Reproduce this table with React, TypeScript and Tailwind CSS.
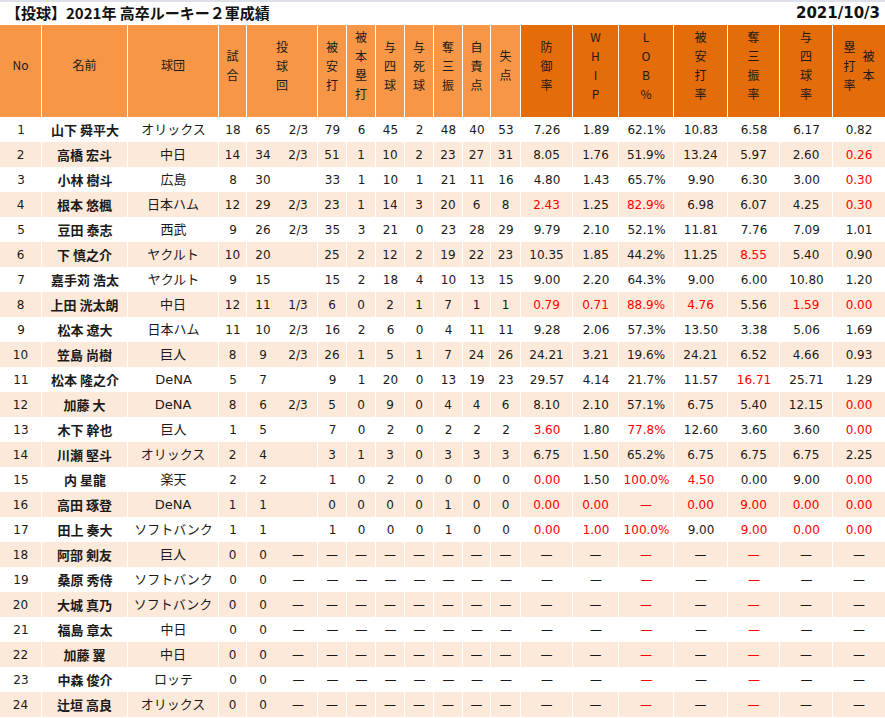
import React from 'react';

const numFont = "font-['DejaVu_Sans','Noto_Sans_CJK_JP',sans-serif]";
const jpFont = "font-['Noto_Sans_CJK_JP',sans-serif]";

// 20 grid columns: 投球回 is split into whole + fraction
const gridCols =
  'grid-cols-[42px_86px_91px_28px_32px_39px_29px_29px_29px_29px_29px_28px_30px_52px_46px_55px_54px_52px_53px_52px]';

type Head = { label: string; vertical?: boolean; dark?: boolean; span2?: boolean; split?: [string, string] };

const heads: Head[] = [
  { label: 'No' },
  { label: '名前' },
  { label: '球団' },
  { label: '試合', vertical: true },
  { label: '投球回', vertical: true, span2: true },
  { label: '被安打', vertical: true },
  { label: '被本塁打', vertical: true },
  { label: '与四球', vertical: true },
  { label: '与死球', vertical: true },
  { label: '奪三振', vertical: true },
  { label: '自責点', vertical: true },
  { label: '失点', vertical: true },
  { label: '防御率', vertical: true, dark: true },
  { label: 'WHIP', vertical: true, dark: true },
  { label: 'LOB%', vertical: true, dark: true },
  { label: '被安打率', vertical: true, dark: true },
  { label: '奪三振率', vertical: true, dark: true },
  { label: '与四球率', vertical: true, dark: true },
  { label: '', dark: true, split: ['塁打率', '被本'] },
];

const D = '—';
const empty = ['0', '0', D, D, D, D, D, D, D, D, D, D, '!' + D, D, '!' + D, D, D];

// "!" marks red values
const rows: [string, string, string[]][] = [
  ['山下 舜平大', 'オリックス', ['18', '65', '2/3', '79', '6', '45', '2', '48', '40', '53', '7.26', '1.89', '62.1%', '10.83', '6.58', '6.17', '0.82']],
  ['高橋 宏斗', '中日', ['14', '34', '2/3', '51', '1', '10', '2', '23', '27', '31', '8.05', '1.76', '51.9%', '13.24', '5.97', '2.60', '!0.26']],
  ['小林 樹斗', '広島', ['8', '30', '', '33', '1', '10', '1', '21', '11', '16', '4.80', '1.43', '65.7%', '9.90', '6.30', '3.00', '!0.30']],
  ['根本 悠楓', '日本ハム', ['12', '29', '2/3', '23', '1', '14', '3', '20', '6', '8', '!2.43', '1.25', '!82.9%', '6.98', '6.07', '4.25', '!0.30']],
  ['豆田 泰志', '西武', ['9', '26', '2/3', '35', '3', '21', '0', '23', '28', '29', '9.79', '2.10', '52.1%', '11.81', '7.76', '7.09', '1.01']],
  ['下 慎之介', 'ヤクルト', ['10', '20', '', '25', '2', '12', '2', '19', '22', '23', '10.35', '1.85', '44.2%', '11.25', '!8.55', '5.40', '0.90']],
  ['嘉手苅 浩太', 'ヤクルト', ['9', '15', '', '15', '2', '18', '4', '10', '13', '15', '9.00', '2.20', '64.3%', '9.00', '6.00', '10.80', '1.20']],
  ['上田 洸太朗', '中日', ['12', '11', '1/3', '6', '0', '2', '1', '7', '1', '1', '!0.79', '!0.71', '!88.9%', '!4.76', '5.56', '!1.59', '!0.00']],
  ['松本 遼大', '日本ハム', ['11', '10', '2/3', '16', '2', '6', '0', '4', '11', '11', '9.28', '2.06', '57.3%', '13.50', '3.38', '5.06', '1.69']],
  ['笠島 尚樹', '巨人', ['8', '9', '2/3', '26', '1', '5', '1', '7', '24', '26', '24.21', '3.21', '19.6%', '24.21', '6.52', '4.66', '0.93']],
  ['松本 隆之介', 'DeNA', ['5', '7', '', '9', '1', '20', '0', '13', '19', '23', '29.57', '4.14', '21.7%', '11.57', '!16.71', '25.71', '1.29']],
  ['加藤 大', 'DeNA', ['8', '6', '2/3', '5', '0', '9', '0', '4', '4', '6', '8.10', '2.10', '57.1%', '6.75', '5.40', '12.15', '!0.00']],
  ['木下 幹也', '巨人', ['1', '5', '', '7', '0', '2', '0', '2', '2', '2', '!3.60', '1.80', '!77.8%', '12.60', '3.60', '3.60', '!0.00']],
  ['川瀬 堅斗', 'オリックス', ['2', '4', '', '3', '1', '3', '0', '3', '3', '3', '6.75', '1.50', '65.2%', '6.75', '6.75', '6.75', '2.25']],
  ['内 星龍', '楽天', ['2', '2', '', '1', '0', '2', '0', '0', '0', '0', '!0.00', '1.50', '!100.0%', '!4.50', '0.00', '9.00', '!0.00']],
  ['高田 琢登', 'DeNA', ['1', '1', '', '0', '0', '0', '0', '1', '0', '0', '!0.00', '!0.00', '!' + D, '!0.00', '!9.00', '!0.00', '!0.00']],
  ['田上 奏大', 'ソフトバンク', ['1', '1', '', '1', '0', '0', '0', '1', '0', '0', '!0.00', '!1.00', '!100.0%', '9.00', '!9.00', '!0.00', '!0.00']],
  ['阿部 剣友', '巨人', empty],
  ['桑原 秀侍', 'ソフトバンク', empty],
  ['大城 真乃', 'ソフトバンク', empty],
  ['福島 章太', '中日', empty],
  ['加藤 翼', '中日', empty],
  ['中森 俊介', 'ロッテ', empty],
  ['辻垣 高良', 'オリックス', empty],
];

function Stack({ text }: { text: string }) {
  return (
    <div className="flex flex-col items-center">
      {text.split('').map((c, i) => (
        <span key={i} className="leading-[19px]">
          {c}
        </span>
      ))}
    </div>
  );
}

function HeaderCell({ h, last }: { h: Head; last: boolean }) {
  return (
    <div
      className={`flex items-center justify-center pb-[12px] text-[12px] text-[#1a1a1a] ${jpFont} ${
        h.dark ? 'bg-[#e46c0a]' : 'bg-[#f79646]'
      } ${last ? '' : 'border-r border-white'} ${h.span2 ? 'col-span-2' : ''}`}
    >
      {h.split ? (
        <div className="flex flex-row items-center gap-[7px]">
          <Stack text={h.split[0]} />
          <Stack text={h.split[1]} />
        </div>
      ) : h.vertical ? (
        <Stack text={h.label} />
      ) : (
        <span>{h.label}</span>
      )}
    </div>
  );
}

function Val({ v }: { v: string }) {
  const red = v.startsWith('!');
  const text = red ? v.slice(1) : v;
  return <span className={red ? 'text-[#ff0000]' : ''}>{text}</span>;
}

export default function App() {
  return (
    <div className="w-[885px] h-[718px] bg-white overflow-hidden">
      {/* title bar */}
      <div className="h-[25px] border-t-2 border-[#dde0e8] flex items-center justify-between pl-[6px] pr-[5px]">
        <h1 className={`text-[15px] font-bold text-[#111] ${jpFont}`}>【投球】2021年 高卒ルーキー２軍成績</h1>
        <span className={`text-[15px] font-bold text-[#111] ${numFont}`}>2021/10/3</span>
      </div>

      {/* header */}
      <div className={`grid ${gridCols} h-[92px]`}>
        {heads.map((h, i) => (
          <HeaderCell key={i} h={h} last={i === heads.length - 1} />
        ))}
      </div>

      {/* body */}
      {rows.map(([name, team, vals], r) => {
        const shaded = r % 2 === 1;
        const line = shaded ? 'border-r border-white' : '';
        return (
          <div
            key={r}
            className={`grid ${gridCols} h-[25px] text-[12px] text-[#1a1a1a] ${numFont} ${shaded ? 'bg-[#fde9d9]' : 'bg-white'}`}
          >
            <div className={`flex items-center justify-center ${line}`}>{r + 1}</div>
            <div className={`flex items-center justify-center font-bold text-[13px] ${jpFont} ${line}`}>{name}</div>
            <div className={`flex items-center justify-center text-[13px] ${line}`}>{team}</div>
            {vals.map((v, i) => (
              <div
                key={i}
                className={`flex items-center justify-center ${i === 1 || i === vals.length - 1 ? '' : line}`}
              >
                <Val v={v} />
              </div>
            ))}
          </div>
        );
      })}
    </div>
  );
}
